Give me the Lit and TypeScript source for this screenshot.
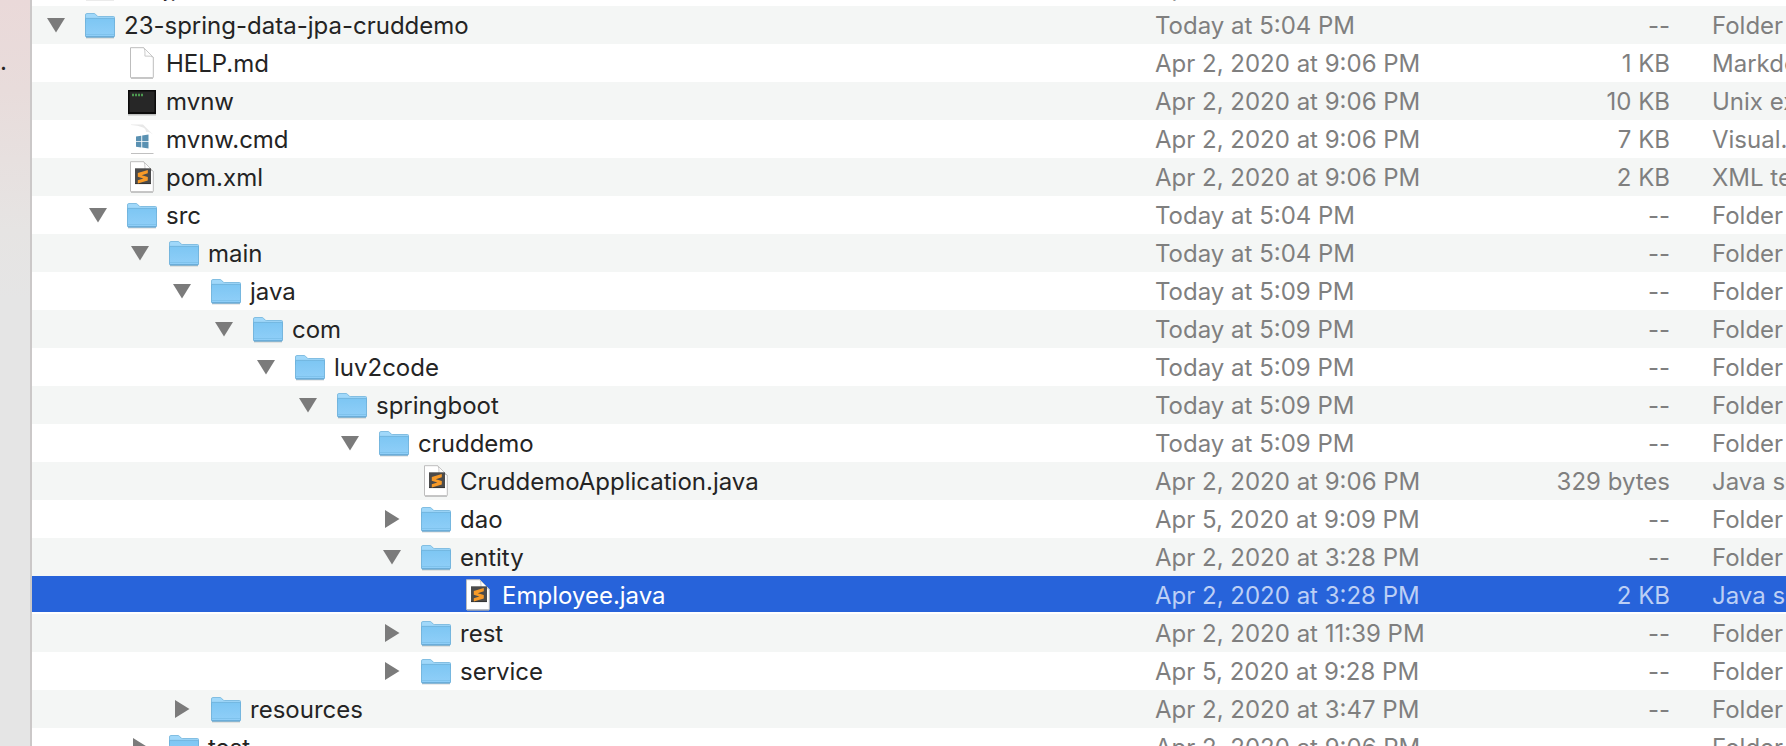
import { LitElement, html, css, svg } from "lit";
import { customElement, property } from "lit/decorators.js";

type IconKind = "folder" | "blank" | "terminal" | "windows" | "sublime";

interface Entry {
  name: string;
  depth: number;
  icon: IconKind;
  open?: boolean;
  date: string;
  size: string;
  kind: string;
  selected?: boolean;
}

const folder = (name: string, depth: number, open: boolean | undefined, date: string): Entry => ({
  name, depth, open, date, icon: "folder", size: "--", kind: "Folder",
});
const file = (name: string, depth: number, icon: IconKind, date: string, size: string, kind: string, selected = false): Entry => ({
  name, depth, icon, date, size, kind, selected,
});

const ENTRIES: Entry[] = [
  folder("22-jpa", 0, undefined, "Apr 2, 2020 at 9:06 PM"),
  folder("23-spring-data-jpa-cruddemo", 0, true, "Today at 5:04 PM"),
  file("HELP.md", 1, "blank", "Apr 2, 2020 at 9:06 PM", "1 KB", "Markdown"),
  file("mvnw", 1, "terminal", "Apr 2, 2020 at 9:06 PM", "10 KB", "Unix executable"),
  file("mvnw.cmd", 1, "windows", "Apr 2, 2020 at 9:06 PM", "7 KB", "Visual...ocument"),
  file("pom.xml", 1, "sublime", "Apr 2, 2020 at 9:06 PM", "2 KB", "XML text"),
  folder("src", 1, true, "Today at 5:04 PM"),
  folder("main", 2, true, "Today at 5:04 PM"),
  folder("java", 3, true, "Today at 5:09 PM"),
  folder("com", 4, true, "Today at 5:09 PM"),
  folder("luv2code", 5, true, "Today at 5:09 PM"),
  folder("springboot", 6, true, "Today at 5:09 PM"),
  folder("cruddemo", 7, true, "Today at 5:09 PM"),
  file("CruddemoApplication.java", 8, "sublime", "Apr 2, 2020 at 9:06 PM", "329 bytes", "Java source"),
  folder("dao", 8, false, "Apr 5, 2020 at 9:09 PM"),
  folder("entity", 8, true, "Apr 2, 2020 at 3:28 PM"),
  file("Employee.java", 9, "sublime", "Apr 2, 2020 at 3:28 PM", "2 KB", "Java source", true),
  folder("rest", 8, false, "Apr 2, 2020 at 11:39 PM"),
  folder("service", 8, false, "Apr 5, 2020 at 9:28 PM"),
  folder("resources", 3, false, "Apr 2, 2020 at 3:47 PM"),
  folder("test", 2, false, "Apr 2, 2020 at 9:06 PM"),
];

const PAGE = svg`
  <path d="M3.5 1.700h13.200L26.300 11.300v19.900q0 .6-.6.6H4.100q-.6 0-.6-.6z" fill="#fff" stroke="#bdbdbd" stroke-width="1"/>
  <path d="M4 32.200h22" stroke="#a9a9a9" stroke-width=".8"/>
  <path d="M16.700 1.700q1.600 2 1.200 8.400 6.600-.4 8.400 1.200z" fill="#fdfdfd" stroke="#c4c4c4" stroke-width=".9"/>`;

const ART: Record<IconKind, unknown> = {
  folder: svg`
    <defs><linearGradient id="g" x1="0" y1="0" x2="0" y2="1">
      <stop offset="0" stop-color="#7dc6f3"/><stop offset="1" stop-color="#90cff8"/>
    </linearGradient></defs>
    <path d="M1 29.800h28" stroke="#000" stroke-opacity=".16" stroke-width="1.400"/>
    <path d="M.5 7q0-1.500 1.300-1.500h7.200q.9 0 1.500.7l1.700 1.900q.4.400 1 .4h15.300q1 0 1 1v5H.5z" fill="#a0d8fa" stroke="#79b9df" stroke-width=".9"/>
    <path d="M.5 10.400h29v17.600q0 1-1 1h-27q-1 0-1-1z" fill="url(#g)" stroke="#6db1db" stroke-width=".9"/>
    <path d="M1 26.500h28" stroke="#79bde6" stroke-width=".7"/>
    <path d="M1 28.900h28" stroke="#5a9cc8" stroke-width=".9"/>`,
  blank: PAGE,
  terminal: svg`
    <path d="M1 7h28v24.500H1z" fill="#000" opacity=".22"/>
    <path d="M1 6h28v24H1z" fill="#0b0b0b"/>
    <path d="M2.500 7.500h25v20.500h-25z" fill="#272727"/>
    <path d="M5 11h11" stroke="#4c9a50" stroke-width="2.400" stroke-dasharray="2 1"/>`,
  windows: svg`
    <path d="M4 2.500h12L26 12v19H4z" fill="#fff"/>
    <path d="M4 2.500h12l10 10q-3-3-7-2.600 0-3-3-4.400-5-2.500-12-2.600z" fill="#e8e8e8"/>
    <path d="M4 31.500h22.500" stroke="#b9b9b9" stroke-width=".9"/>
    <path d="M9 14.500l5.300-.8v5.500H9zM15.200 13.600l6.300-1v6.600h-6.300zM9 20h5.300v5.500L9 24.700zM15.200 20h6.300v6.500l-6.300-.9z" fill="#5a91b2"/>`,
  sublime: svg`${PAGE}
    <path d="M8 8.300h16v15.700H8z" fill="#4b4b4b"/>
    <path d="M8 23.600h16" stroke="#2e2e2e" stroke-width=".8"/>
    <path d="M20.800 10v3.300l-6 1.900 6 1.800v3.600l-10 3v-3.300l5.600-1.800-5.600-1.800v-3.700z" fill="#f79a28"/>`,
};

@customElement("file-icon")
export class FileIcon extends LitElement {
  @property() kind: IconKind = "folder";

  static styles = css`
    :host { display: block; width: 30px; height: 34px; flex: none; }
    .art { display: block; width: 100%; height: 100%; }
  `;

  render() {
    return html`<svg class="art" viewBox="0 0 30 34" aria-hidden="true">${ART[this.kind]}</svg>`;
  }
}

@customElement("app-root")
export class AppRoot extends LitElement {
  @property({ attribute: false }) entries = ENTRIES;

  static styles = css`
    :host {
      display: flex;
      height: 100vh;
      overflow: hidden;
      background: #fff;
      color: #242424;
      font: 24px/36px Inter, "Liberation Sans", sans-serif;
    }
    .desktop {
      flex: none;
      box-sizing: border-box;
      width: 32px;
      padding-top: 44px;
      overflow: hidden;
      border-right: 2px solid #cbc8c8;
      background: linear-gradient(#ead9d9 0, #e8dcdb 90px, #e6e4e3 230px, #e5e5e5 300px);
    }
    .list { flex: 1; min-width: 0; overflow: hidden; }
    .table {
      width: 100%;
      margin-top: -32px;
      border-collapse: collapse;
      table-layout: fixed;
    }
    .col-date { width: 310px; }
    .col-size { width: 205px; }
    .col-kind { width: 116px; }
    .row:nth-child(even) { background: #f4f6f5; }
    .cell {
      box-sizing: border-box;
      height: 38px;
      padding: 2px 0 0;
      overflow: hidden;
      white-space: nowrap;
      color: #7f7f7f;
    }
    .size { text-align: right; }
    .kind { padding-left: 42px; }
    .name { padding: 0; color: #242424; }
    .item { display: flex; align-items: center; height: 38px; }
    .toggle {
      display: flex;
      flex: none;
      width: 18px;
      height: 18px;
      margin-right: 20px;
      padding: 0;
      border: 0;
      background: none;
      color: #7b7b7b;
    }
    .arrow { display: block; width: 18px; height: 18px; fill: currentColor; }
    .spacer { flex: none; width: 38px; }
    .label { margin-left: 9px; padding-top: 2px; }
    .row.selected { background: linear-gradient(#2763da 36px, #fff 36px); }
    .selected .cell { color: #bccff5; }
    .selected .name { color: #fff; }
  `;

  private row(e: Entry) {
    return html`
      <tr class="row ${e.selected ? "selected" : ""}">
        <td class="cell name">
          <div class="item" style="padding-left:${15 + e.depth * 42}px">
            ${e.open === undefined
              ? html`<span class="spacer"></span>`
              : html`<button class="toggle" aria-label=${e.name} aria-expanded=${e.open}>
                  <svg class="arrow" viewBox="0 0 18 18" aria-hidden="true">
                    <path d=${e.open ? "M0 2h18L9 16.500z" : "M2 0v18L16.500 9z"}></path>
                  </svg>
                </button>`}
            <file-icon .kind=${e.icon}></file-icon>
            <span class="label">${e.name}</span>
          </div>
        </td>
        <td class="cell">${e.date}</td>
        <td class="cell size">${e.size}</td>
        <td class="cell kind">${e.kind}</td>
      </tr>`;
  }

  render() {
    return html`
      <div class="desktop">.</div>
      <main class="list">
        <table class="table">
          <colgroup>
            <col /><col class="col-date" /><col class="col-size" /><col class="col-kind" />
          </colgroup>
          <tbody>${this.entries.map((e) => this.row(e))}</tbody>
        </table>
      </main>`;
  }
}
